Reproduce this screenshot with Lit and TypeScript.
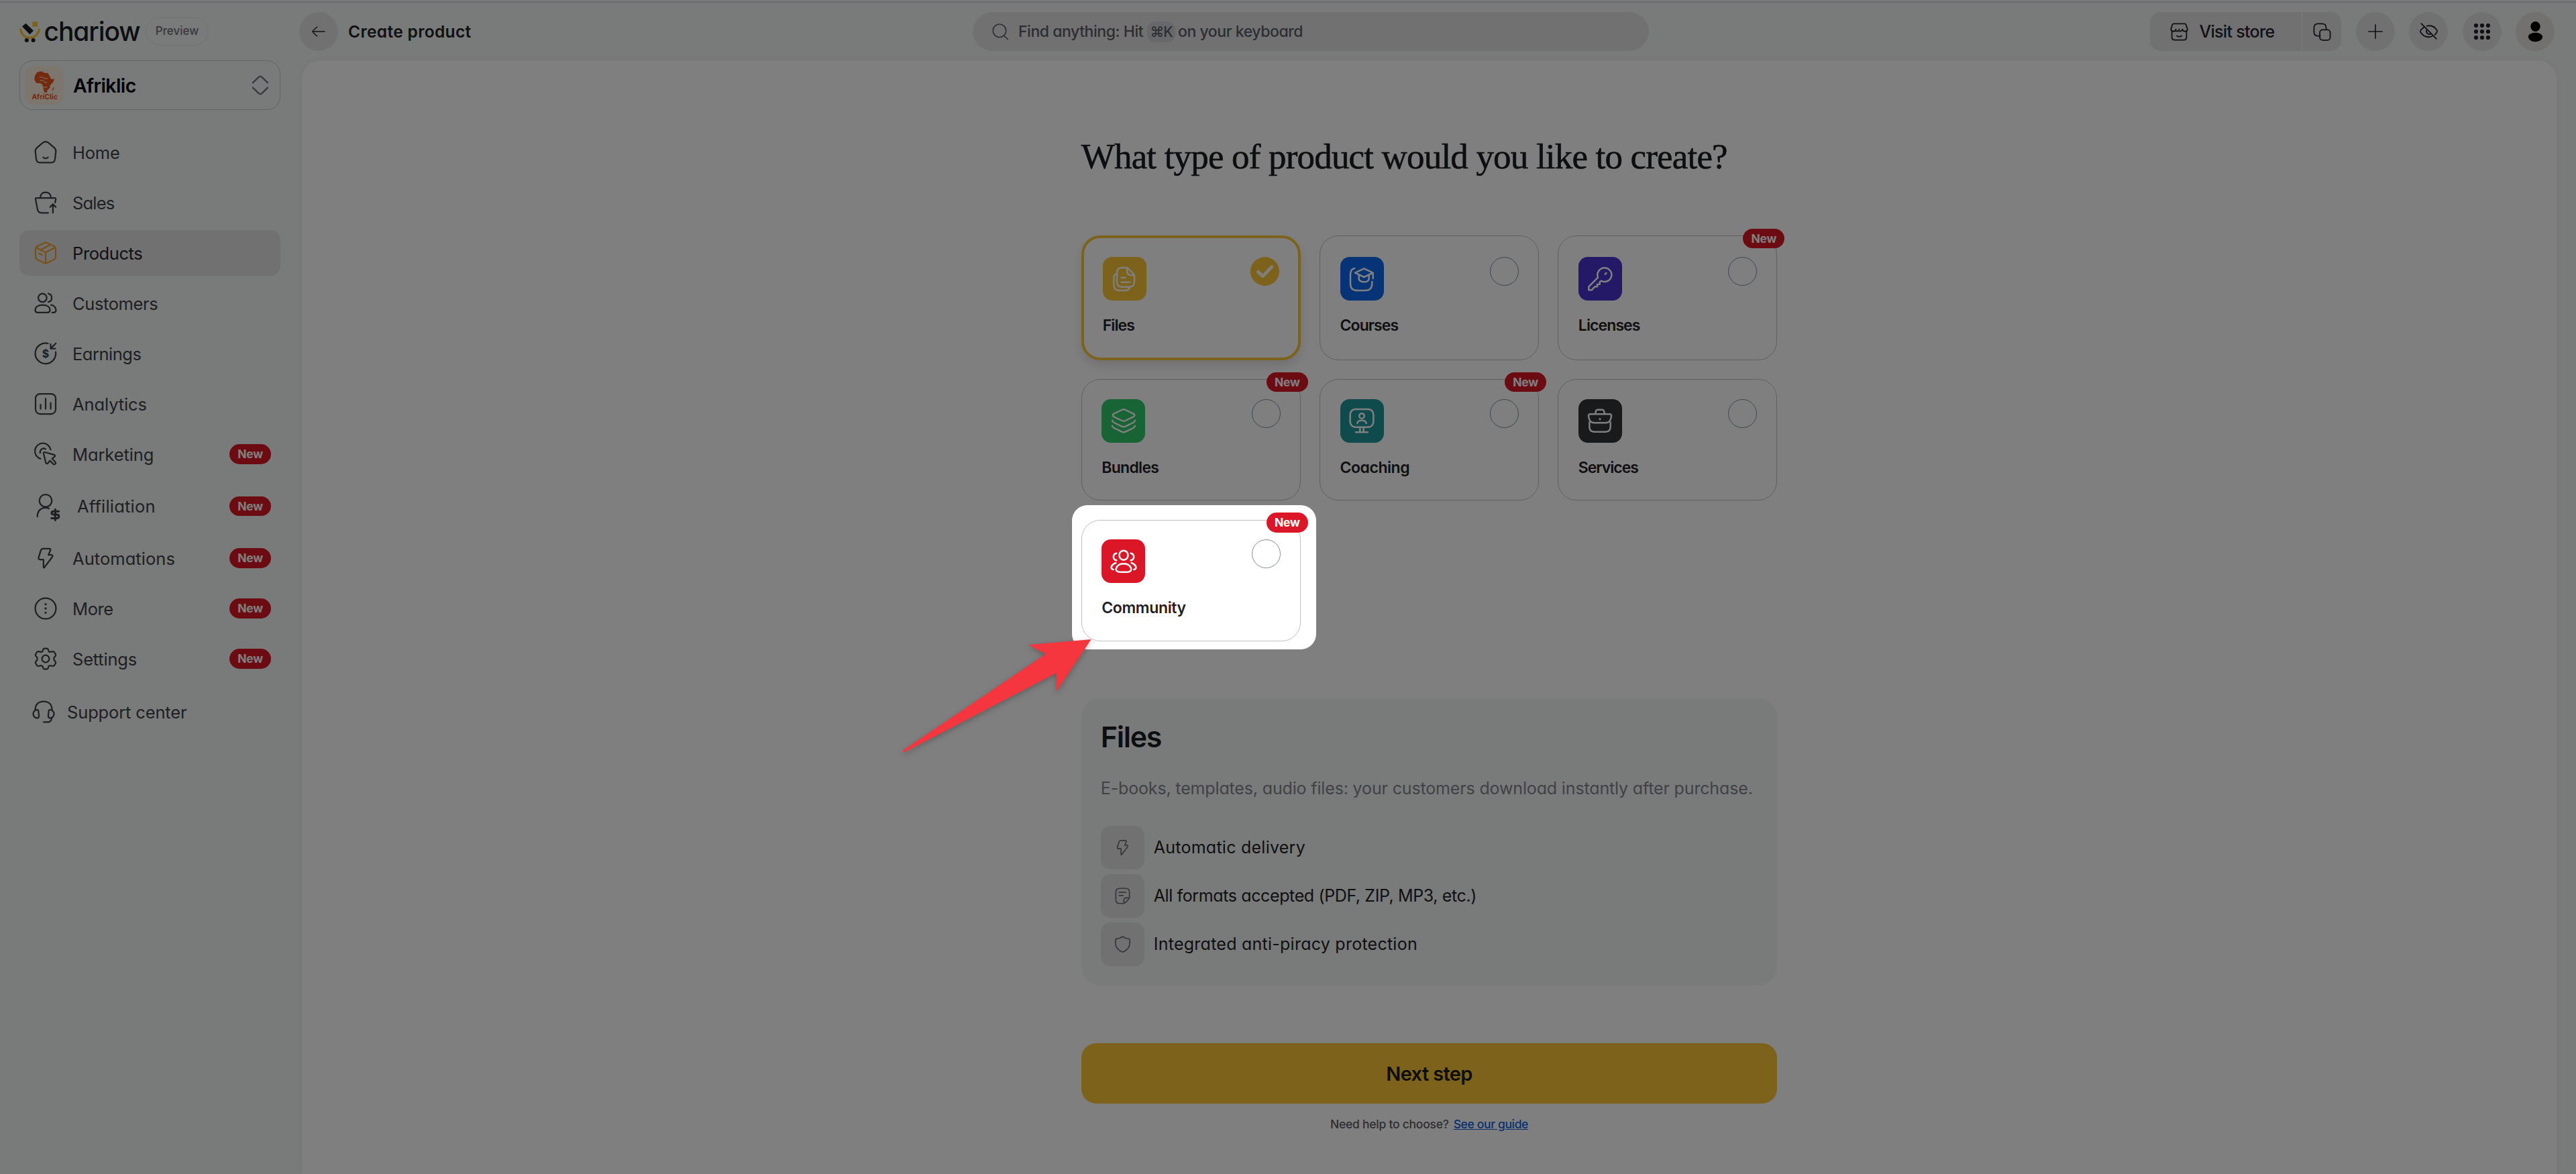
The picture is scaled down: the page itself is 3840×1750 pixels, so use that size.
import { LitElement, html, css, svg, nothing } from 'lit';
import { customElement, property } from 'lit/decorators.js';
import { classMap } from 'lit/directives/class-map.js';

const icons: Record<string, unknown> = {
  home: svg`
    <path d="M9.3 2.4Q12 .6 14.7 2.4L20.4 7.2Q22.4 8.9 22.2 11.2L21.3 18.9Q20.8 22.2 17.7 22.2H6.3Q3.2 22.2 2.7 18.9L1.8 11.2Q1.6 8.9 3.6 7.2Z" />
    <path d="M9.6 17Q12 19.2 14.4 17" />`,
  sales: svg`
    <path d="M6.8 7.2C6.8 3.6 9 1.7 12 1.7S17.2 3.6 17.2 7.2" />
    <path d="M14.6 22.2H8.2C5.2 22.2 4.3 21 3.9 18.4L2 8.6Q1.8 7.4 3 7.4H21Q22.3 7.4 22.1 8.6L21.4 12" />
    <path d="M19.3 22.2V13.8M16.5 16.4 19.3 13.6 22.1 16.4" />`,
  products: svg`
    <path d="M10.3 2.1Q12 1.3 13.7 2.1L20 5.2Q22 6.2 22 8.3V15.7Q22 17.8 20 18.8L13.7 21.9Q12 22.7 10.3 21.9L4 18.8Q2 17.8 2 15.7V8.3Q2 6.2 4 5.2Z" />
    <path d="M2.8 6.9 12 11.5 21.2 6.9M12 11.7V22.2M7 9 16.6 3.8M5.6 12.6 8.4 14" />`,
  customers: svg`
    <circle cx="8.9" cy="6.6" r="4.2" />
    <path d="M14.7 2.4A4.3 4.3 0 0 1 14.7 10.8M17.4 13.8C20.4 14 22.3 16.3 22.3 18.8Q22.3 21.2 20 21.2H18.4" />
    <path d="M4 21.2Q1.7 21.2 1.7 18.8C1.7 15.6 4.6 13.8 9 13.8S16.3 15.6 16.3 18.8Q16.3 21.2 14 21.2Z" />`,
  earnings: svg`
    <path d="M14.4 2A10.2 10.2 0 1 0 22 10.4" />
    <path d="M22.2 1.8 17.4 6.6M17 2.6V7.1H21.6" />
    <text class="glyph" x="12" y="15.9" font-size="10.6">$</text>`,
  analytics: svg`
    <rect x="2" y="2" width="20" height="20" rx="4.4" />
    <path d="M7 12.8V17M12 6.8V17M17 11V17" />`,
  marketing: svg`
    <path d="M6.9 16.6A7.9 7.9 0 1 1 17 7.6" />
    <path d="M6.6 10.8A3.6 3.6 0 0 1 12 6.9" />
    <path d="M10 11.3Q9.7 9.8 11.2 10L20.3 12.6Q22.2 13.4 20.8 14.6L18.4 16.4 21.6 19.8Q22.6 21 21.3 21.9 20.2 22.7 19.2 21.4L16.2 18.4 14.4 20.8Q13.2 22.3 12.2 20.6Z" />`,
  affiliation: svg`
    <circle cx="12" cy="6.2" r="6.2" />
    <path d="M3.8 22C3.8 16.6 7 13.2 12 13.2Q13.8 13.2 15.4 14" />
    <path class="heavy" d="M25 16.8H20Q18 16.8 18 18.4T20 20H23.2Q25.2 20 25.2 21.8T23.2 23.6H17.8M21.6 14.8V25.6" />`,
  bolt: svg`
    <path d="M9.6 2.6H15.6Q17.2 2.7 16.8 4L14.8 8.8H17.6Q19.6 9 18.6 10.8L10.6 21.4Q9.8 21.9 9.9 20.8V13.4H6.4Q4.7 13.2 5 11.6L7.2 4.4Q7.8 2.6 9.6 2.6Z" />`,
  more: svg`
    <circle cx="12" cy="12" r="10.3" />
    <path class="dots" d="M12 7.8V7.81M12 12V12.01M12 16.2V16.21" />`,
  settings: svg`
    <circle cx="12" cy="12" r="3.6" />
    <path d="M9.6 2.6Q9.9 1.7 10.9 1.7H13.1Q14.1 1.7 14.4 2.6L15 4.5Q16 5.7 17.4 5.1L19.3 4.8Q20.2 4.7 20.7 5.5L21.9 7.5Q22.4 8.3 21.8 9.1L20.5 10.6Q19.9 12 20.5 13.4L21.8 14.9Q22.4 15.7 21.9 16.5L20.7 18.5Q20.2 19.3 19.3 19.2L17.4 18.9Q16 18.3 15 19.5L14.4 21.4Q14.1 22.3 13.1 22.3H10.9Q9.9 22.3 9.6 21.4L9 19.5Q8 18.3 6.6 18.9L4.7 19.2Q3.8 19.3 3.3 18.5L2.1 16.5Q1.6 15.7 2.2 14.9L3.5 13.4Q4.1 12 3.5 10.6L2.2 9.1Q1.6 8.3 2.1 7.5L3.3 5.5Q3.8 4.7 4.7 4.8L6.6 5.1Q8 5.7 9 4.5Z" />`,
  support: svg`
    <path d="M3.6 10.4C3.6 4.6 7 1.8 12 1.8S20.4 4.6 20.4 10.4" />
    <path d="M7 12.2Q7 9.8 5.2 10 1.7 11 1.7 14.1T5.2 18.2Q7.4 18.4 7.4 16ZM17 12.2Q17 9.8 18.8 10 22.3 11 22.3 14.1T18.8 18.2Q16.6 18.4 16.6 16Z" />
    <path d="M20 18.4Q19.6 22.3 15.6 22.3H12" />`,
  chevrons: svg`<path d="M4.6 9.6 10.4 3.9Q12 2.6 13.6 3.9L19.4 9.6M4.6 14.4 10.4 20.1Q12 21.4 13.6 20.1L19.4 14.4" />`,
  back: svg`<path d="M21 12H3.4M9.6 5.2Q3 10.8 3 12T9.6 18.8" />`,
  search: svg`<circle cx="11" cy="10.8" r="9" /><path d="M17.2 17.6 22.4 22.6" />`,
  store: svg`
    <path d="M3 11V18.4Q3 22 6.4 22H17.6Q21 22 21 18.4V11" />
    <path d="M8 8.8Q7.8 11.4 4.8 11.4 2 11.2 1.8 8.6L3.6 3.2Q4 2 5.2 2H18.8Q20 2 20.4 3.2L22.2 8.6Q22 11.4 19.4 11.4 16.4 11.4 16 8.8 15.4 11.4 12.2 11.2M12 8.8Q11.4 11.4 8.4 11.2" />
    <path d="M9 17Q12 18.8 15 17" />`,
  copy: svg`
    <path d="M9.6 17H7Q2 17 2 12V7Q2 2 7 2H12Q17 2 17 7V9" />
    <rect x="9.2" y="9.4" width="12.8" height="12.8" rx="3.4" />`,
  plus: svg`<path d="M12 2.6V21.4M2.6 12H21.4" />`,
  hide: svg`
    <path d="M2.8 1.8 21.4 20.6" />
    <path d="M9.6 4.8Q17.6 2.8 22.2 10.2 22.6 11.4 22.2 12.2 21 14 19.6 15.6M6 6.4Q3.2 8.2 1.8 10.6 1.5 11.4 1.8 12.2 5.6 18.4 12 18.4 14.4 18.2 16.4 17.2" />
    <path d="M9.6 9.4A3.6 3.6 0 0 0 14.4 14.4" />`,
  grid: svg`<path class="grid-dots" d="M3 3V3.01M12 3V3.01M21 3V3.01M3 12V12.01M12 12V12.01M21 12V12.01M3 21V21.01M12 21V21.01M21 21V21.01" />`,
  user: svg`<path class="solid" d="M12 0A5.6 5.8 0 0 1 12 11.6 5.6 5.8 0 0 1 12 0ZM12 13C16.6 13 20.2 15 20.2 17.8S16.6 23.4 12 23.4 3.8 20.8 3.8 17.8 7.4 13 12 13Z" />`,
  files: svg`
    <path d="M5 7.4Q2.6 8 2.6 11V17Q2.6 22.2 7.4 22.2H12.4Q16.4 22.2 17 19" />
    <path d="M14 1.8H10Q5.4 1.8 5.4 6.4V14.4Q5.4 19 10 19H16.4Q21 19 21 14.4V8.6Q18 4 14 1.8ZM14.4 2V5Q14.4 8.4 17.6 8.4H20.8" />
    <path d="M9.4 10.8H13M9.4 14.8H17" />`,
  courses: svg`
    <path d="M5.6 2.4Q1.8 3 1.8 8V16Q1.8 22.2 8 22.2H15Q21 22.2 21.2 16V14.4" />
    <path d="M14 2.6 22 6.4 14 10.2 6 6.4ZM22 6.4V11.4M9.4 8.4V12Q10.4 14.6 14 14.6T18.4 12V8.4" />`,
  licenses: svg`
    <path d="M15.6 2A6.2 6.2 0 1 1 13.2 13.6L11.8 14.6V16.6H9.6V18.8H7.4L4.6 21.8H2V18.8L10.2 10.6A6.4 6.4 0 0 1 15.6 2ZM16.6 7.6 17.6 6.6" />`,
  bundles: svg`
    <path d="M10.4 2.4Q12 1.4 13.6 2.4L20.6 5.8Q23 7.2 20.6 8.6L13.6 12Q12 12.8 10.4 12L3.4 8.6Q1 7.2 3.4 5.8Z" />
    <path d="M1.8 11.8Q2 13 3.4 13.8L10.4 17.2Q12 18 13.6 17.2L20.6 13.8Q22 13 22.2 11.8M1.8 16.6Q2 17.8 3.4 18.6L10.4 22Q12 22.8 13.6 22L20.6 18.6Q22 17.8 22.2 16.6" />`,
  coaching: svg`
    <rect x="1.6" y="1.8" width="20.8" height="16" rx="4.6" />
    <circle cx="12" cy="7.8" r="2.3" />
    <path d="M8 14.4Q8.4 11.8 12 11.8T16 14.4M10.4 18V22M13.6 18V22M6.6 22.4H17.4" />`,
  services: svg`
    <path d="M2.6 13.4V17.6Q2.6 22 7 22H17Q21.4 22 21.4 17.6V13.4" />
    <path d="M3.4 6.2H20.6Q22.4 6.2 22.2 8 21.6 14 17 14H7Q2.4 14 1.8 8 1.6 6.2 3.4 6.2ZM8 6Q8 2.2 10 2.2H14Q16 2.2 16 6M12 10.4V11" />`,
  community: svg`
    <ellipse cx="12" cy="6.4" rx="3.9" ry="4.2" />
    <path d="M8.4 21.4Q5 21 5.2 18.6 6.4 14 12 14T18.8 18.6Q19 21 15.6 21.4Z" />
    <path d="M5.6 4.6Q2.9 5.2 2.9 7.8T5.6 11M18.4 4.6Q21.1 5.2 21.1 7.8T18.4 11M5 13.2Q1 14.8 1 17.6 1.2 19 2.8 19.2M19 13.2Q23 14.8 23 17.6 22.8 19 21.2 19.2" />`,
  note: svg`
    <path d="M13.4 22H8Q3 22 3 17V7Q3 2 8 2H16Q21 2 21 7V14.4Q18.6 19.4 13.4 22ZM13.6 21.6V18Q13.6 14.6 17 14.6H20.8" />
    <path d="M7.4 7.2H16.4M7.4 11.4H12.6" />`,
  shield: svg`<path d="M12 1.8Q15.6 4.6 20.2 4.8 21.4 5 21.4 6.4V10.8Q21.2 18.6 12 22.4 2.8 18.6 2.6 10.8V6.4Q2.6 5 3.8 4.8 8.4 4.6 12 1.8Z" />`,
};

const iconStyles = css`
  svg {
    display: block;
    flex: none;
    fill: none;
    stroke: currentColor;
    stroke-width: 1.5;
    stroke-linecap: round;
    stroke-linejoin: round;
    overflow: visible;
  }
  .glyph {
    fill: currentColor;
    stroke: none;
    font-weight: 700;
    text-anchor: middle;
  }
  .heavy {
    stroke-width: 2;
  }
  .dots {
    stroke-width: 2.2;
  }
  .grid-dots {
    stroke-width: 6.2;
  }
  .solid {
    fill: currentColor;
    stroke: none;
  }
`;

const badgeStyles = css`
  .badge {
    box-sizing: border-box;
    width: 62px;
    height: 29.5px;
    border-radius: 15px;
    background: #db1627;
    color: white;
    font-size: 17.5px;
    font-weight: 700;
    letter-spacing: -0.3px;
    line-height: 29px;
    text-align: center;
  }
`;

const icon = (name: string, size = 36) => html`
  <svg viewBox="0 0 24 24" width=${size} height=${size}>${icons[name]}</svg>
`;

interface NavItem {
  label: string;
  icon: string;
  tracking: number;
  active?: boolean;
  badge?: boolean;
  variant?: string;
}

const navItems: NavItem[] = [
  { label: 'Home', icon: 'home', tracking: -0.2 },
  { label: 'Sales', icon: 'sales', tracking: -0.8 },
  { label: 'Products', icon: 'products', tracking: -0.4, active: true },
  { label: 'Customers', icon: 'customers', tracking: -0.4 },
  { label: 'Earnings', icon: 'earnings', tracking: -0.5 },
  { label: 'Analytics', icon: 'analytics', tracking: -0.1 },
  { label: 'Marketing', icon: 'marketing', tracking: -0.1, badge: true },
  { label: 'Affiliation', icon: 'affiliation', tracking: 0.2, badge: true, variant: 'affiliation' },
  { label: 'Automations', icon: 'bolt', tracking: 0.05, badge: true },
  { label: 'More', icon: 'more', tracking: -0.4, badge: true },
  { label: 'Settings', icon: 'settings', tracking: -0.2, badge: true },
  { label: 'Support center', icon: 'support', tracking: -0.15, variant: 'support' },
];

const productTypes = [
  { label: 'Files', icon: 'files', color: '#fbc536', tracking: -0.9, selected: true },
  { label: 'Courses', icon: 'courses', color: '#0f69ef', tracking: -0.9 },
  { label: 'Licenses', icon: 'licenses', color: '#4733cf', tracking: -0.9, badge: true },
  { label: 'Bundles', icon: 'bundles', color: '#30c868', tracking: -0.7, badge: true },
  { label: 'Coaching', icon: 'coaching', color: '#1f9498', tracking: -0.45, badge: true },
  { label: 'Services', icon: 'services', color: '#333538', tracking: -1 },
  { label: 'Community', icon: 'community', color: '#db1627', tracking: -0.35, badge: true },
];

const features = [
  { label: 'Automatic delivery', icon: 'bolt', tracking: 0.25 },
  { label: 'All formats accepted (PDF, ZIP, MP3, etc.)', icon: 'note', tracking: -0.38 },
  { label: 'Integrated anti-piracy protection', icon: 'shield', tracking: 0.25 },
];

@customElement('side-bar')
class SideBar extends LitElement {
  static styles = [iconStyles, badgeStyles, css`
    :host {
      display: block;
      width: 389px;
      padding-left: 29px;
    }
    .brand {
      display: flex;
      align-items: center;
      height: 86px;
    }
    .brand-name {
      margin-left: 5.5px;
      width: 143.5px;
      font-size: 39px;
      font-weight: 500;
      line-height: 48px;
      letter-spacing: -1.1px;
      color: #1b1c1f;
    }
    .preview {
      box-sizing: border-box;
      width: 94px;
      height: 42px;
      margin-left: 8px;
      border: 1px solid #e2e3e6;
      border-radius: 21px;
      font-size: 17px;
      font-weight: 500;
      line-height: 39px;
      text-align: center;
      color: #71717a;
    }
    .shop {
      display: flex;
      align-items: center;
      box-sizing: border-box;
      height: 74px;
      padding: 0 11px 0 7px;
      border: 1px solid #c6c8c7;
      border-radius: 20px;
      color: black;
    }
    .shop-name {
      flex: 1;
      margin-left: 14px;
      font-size: 28.5px;
      font-weight: 600;
      letter-spacing: -0.6px;
    }
    .avatar-text {
      fill: #e9541c;
      stroke: none;
      font-weight: 700;
    }
    .chevrons {
      color: #71717a;
    }
    nav {
      display: flex;
      flex-direction: column;
      gap: 7px;
      margin-top: 29px;
    }
    .item {
      display: flex;
      align-items: center;
      box-sizing: border-box;
      height: 68px;
      padding: 0 14px 0 21px;
      border-radius: 14px;
      font-size: 25.5px;
      font-weight: 400;
      color: #3f4045;
    }
    .item span {
      flex: 1;
      margin-left: 22px;
    }
    .item.active {
      background: #e2e3e5;
      color: #222327;
    }
    .item.active svg {
      color: #f0a22e;
    }
    .item.affiliation {
      height: 73px;
    }
    .item.affiliation span {
      margin-left: 29px;
    }
    .item.support {
      height: 76px;
      padding-left: 18px;
    }
    .item.support span {
      margin-left: 17px;
    }
  `];

  render() {
    return html`
      <div class="brand">
        <svg viewBox="0 0 31 32" width="31" height="32">
          <path d="M1.7 11.5A13.8 13.8 0 0 0 29.3 11.5" stroke="#fbc536" stroke-width="3.4" stroke-linecap="butt" />
          <rect x="19.4" y="1.2" width="7.8" height="7.6" fill="#fbc536" stroke="none" />
          <path d="M4 8.6 9.4 3.8 21 14.8 15.4 20.2Z" fill="#1b1c1f" stroke="none" />
          <circle cx="10.8" cy="29" r="3" fill="#1b1c1f" stroke="none" />
          <circle cx="20.6" cy="29" r="3" fill="#1b1c1f" stroke="none" />
        </svg>
        <div class="brand-name">chariow</div>
        <div class="preview">Preview</div>
      </div>
      <div class="shop">
        <svg viewBox="0 0 58 58" width="58" height="58">
          <rect width="58" height="58" rx="14" fill="#f8eddc" stroke="none" />
          <path fill="#e9541c" stroke="none" d="M18 10 22 8.5H27L28 10.5 34.5 11 38 17.5 39.6 20 44 19.6 42.6 24 37.4 29.4 37.6 33 34 36 32.6 40 29.4 40 28 36.4 27 31 25.4 27 22 26 17.4 26 14.2 21 15 15ZM40.6 36 43 31.4 43.2 34 41.4 37.6Z" />
          <path stroke="#f8eddc" stroke-width="1" d="M22 17H27L29 19H34M23 22H27L30 25H33M24 32H33" />
          <text class="avatar-text" x="10.4" y="50" font-size="11" textLength="38.4" lengthAdjust="spacingAndGlyphs">AfriClic</text>
        </svg>
        <div class="shop-name">Afriklic</div>
        <div class="chevrons">${icon('chevrons', 36)}</div>
      </div>
      <nav>
        ${navItems.map(item => html`
          <div class="item ${classMap({ active: !!item.active, [item.variant ?? 'plain']: true })}">
            ${icon(item.icon)}
            <span style="letter-spacing: ${item.tracking}px">${item.label}</span>
            ${item.badge ? html`<div class="badge">New</div>` : nothing}
          </div>
        `)}
      </nav>
    `;
  }
}

@customElement('top-bar')
class TopBar extends LitElement {
  static styles = [iconStyles, css`
    :host {
      display: flex;
      align-items: center;
      height: 58px;
      padding: 14px 32px 14px 0;
    }
    .round {
      display: flex;
      align-items: center;
      justify-content: center;
      width: 58px;
      height: 58px;
      border-radius: 50%;
      background: #e2e3e5;
      color: #222327;
    }
    .title {
      width: 931px;
      margin-left: 15px;
      font-size: 24.5px;
      font-weight: 600;
      letter-spacing: 0.35px;
      color: #222327;
    }
    .search {
      display: flex;
      align-items: center;
      box-sizing: border-box;
      width: 1008px;
      height: 58px;
      padding-left: 28px;
      border-radius: 29px;
      background: #e2e3e5;
      font-size: 23px;
      font-weight: 500;
      letter-spacing: -0.45px;
      white-space: nowrap;
      color: #5a5c63;
    }
    .search-text {
      margin-left: 14px;
      width: 187px;
    }
    .kbd {
      width: 42px;
      height: 31px;
      margin: 0 4px 0 5px;
      border-radius: 12px;
      background: #cfd0d3;
      line-height: 31px;
      text-align: center;
      font-size: 21px;
      letter-spacing: -1px;
    }
    .actions {
      display: flex;
      align-items: center;
      gap: 21.4px;
      margin-left: auto;
    }
    .store {
      display: flex;
      height: 58px;
      border-radius: 15px;
      background: #e2e3e5;
      color: #222327;
      font-size: 25px;
      font-weight: 500;
      letter-spacing: -0.7px;
    }
    .visit {
      display: flex;
      align-items: center;
      gap: 15px;
      box-sizing: border-box;
      width: 227px;
      padding-left: 29px;
      border-right: 1px solid #fafafa;
    }
    .copy {
      display: flex;
      align-items: center;
      justify-content: center;
      width: 58px;
    }
    .profile {
      background: #e4e2e1;
      color: black;
    }
  `];

  render() {
    return html`
      <div class="round">${icon('back', 24)}</div>
      <div class="title">Create product</div>
      <div class="search">
        ${icon('search', 26)}
        <div class="search-text">Find anything: Hit</div>
        <div class="kbd">⌘K</div>
        <span>on your keyboard</span>
      </div>
      <div class="actions">
        <div class="store">
          <div class="visit">${icon('store', 29)}<span>Visit store</span></div>
          <div class="copy">${icon('copy', 29)}</div>
        </div>
        <div class="round">${icon('plus', 26)}</div>
        <div class="round">${icon('hide', 29)}</div>
        <div class="round">${icon('grid', 24)}</div>
        <div class="round profile">${icon('user', 31)}</div>
      </div>
    `;
  }
}

@customElement('product-card')
class ProductCard extends LitElement {
  @property() label = '';
  @property() icon = '';
  @property() color = '';
  @property({ type: Number }) tracking = 0;
  @property({ type: Boolean }) selected = false;
  @property({ type: Boolean }) badge = false;

  static styles = [iconStyles, badgeStyles, css`
    :host {
      display: flex;
    }
    .card {
      position: relative;
      flex: 1;
      box-sizing: border-box;
      min-height: 181px;
      padding: 28px 29px 28px 29.5px;
      border: 1px solid #bec0c3;
      border-radius: 28px;
      background: white;
      display: flex;
      flex-direction: column;
      justify-content: center;
    }
    .card.selected {
      min-height: 185px;
      padding: 28px;
      border: 4px solid #fbc536;
      box-shadow: 0 8px 16px rgba(0, 0, 0, 0.12);
    }
    .head {
      display: flex;
      justify-content: space-between;
      align-items: flex-start;
    }
    .tile {
      display: flex;
      align-items: center;
      justify-content: center;
      width: 65px;
      height: 65px;
      border-radius: 14px;
      color: white;
    }
    .radio {
      box-sizing: border-box;
      width: 43px;
      height: 43px;
      border: 1px solid #7f8ca3;
      border-radius: 50%;
    }
    .selected .radio {
      border: 0;
      background: #fbc536;
      color: white;
    }
    .radio svg {
      width: 43px;
      height: 43px;
      stroke-width: 2.6;
    }
    .label {
      margin: 19px 0 2px;
      font-size: 23px;
      font-weight: 600;
      line-height: 36px;
      color: #1f2023;
    }
    .badge {
      position: absolute;
      top: -11.5px;
      right: -12px;
    }
  `];

  render() {
    return html`
      <div class="card ${classMap({ selected: this.selected })}">
        <div class="head">
          <div class="tile" style="background: ${this.color}">${icon(this.icon, 40)}</div>
          <div class="radio">
            ${this.selected
              ? html`<svg viewBox="0 0 24 24"><path d="M6.4 12.4 10.4 16 17.8 8.2" /></svg>`
              : nothing}
          </div>
        </div>
        <div class="label" style="letter-spacing: ${this.tracking}px">${this.label}</div>
        ${this.badge ? html`<div class="badge">New</div>` : nothing}
      </div>
    `;
  }
}

@customElement('product-picker')
class ProductPicker extends LitElement {
  static styles = [iconStyles, css`
    :host {
      display: block;
      width: 1037.5px;
    }
    h1 {
      margin: -2px 0 0;
      font-family: 'Liberation Serif', serif;
      font-size: 53px;
      font-weight: 400;
      line-height: 64px;
      letter-spacing: -0.82px;
      color: #1b1c1f;
      -webkit-text-stroke: 0.6px #1b1c1f;
      white-space: nowrap;
    }
    .cards {
      display: grid;
      grid-template-columns: repeat(3, 1fr);
      gap: 28.3px;
      margin-top: 86px;
    }
    .details {
      box-sizing: border-box;
      height: 428px;
      margin-top: 85.6px;
      padding: 27.6px 29px;
      border-radius: 28px;
      background: #f3f6f4;
    }
    h2 {
      margin: 0;
      font-size: 43px;
      font-weight: 600;
      line-height: 58px;
      letter-spacing: -1.3px;
      color: #1b1c1f;
    }
    .description {
      margin: 28px 0 36.4px;
      font-size: 25px;
      line-height: 40px;
      letter-spacing: -0.15px;
      color: #82838c;
      white-space: nowrap;
    }
    .features {
      display: flex;
      flex-direction: column;
      gap: 7px;
    }
    .feature {
      display: flex;
      align-items: center;
      gap: 14px;
      font-size: 25px;
      color: #1f2023;
    }
    .feature span {
      padding-bottom: 1px;
    }
    .feature-icon {
      display: flex;
      align-items: center;
      justify-content: center;
      width: 65px;
      height: 65px;
      border-radius: 14px;
      background: #e2e3e5;
      color: #6b6c74;
    }
    .next {
      height: 90px;
      margin-top: 86px;
      border-radius: 22px;
      background: #fbc536;
      font-size: 29px;
      font-weight: 600;
      line-height: 91px;
      letter-spacing: -0.65px;
      text-align: center;
      color: #1b1c1f;
    }
    .help {
      display: flex;
      justify-content: center;
      gap: 7px;
      margin-top: 16.4px;
      font-size: 17.5px;
      line-height: 28px;
      font-weight: 500;
      letter-spacing: -0.25px;
      color: #5a5c63;
    }
    .help a {
      color: #0f5fe0;
      letter-spacing: -0.35px;
      text-decoration: underline;
    }
  `];

  render() {
    return html`
      <h1>What type of product would you like to create?</h1>
      <div class="cards">
        ${productTypes.map(type => html`
          <product-card
            label=${type.label}
            icon=${type.icon}
            color=${type.color}
            tracking=${type.tracking}
            ?selected=${type.selected}
            ?badge=${type.badge}
          ></product-card>
        `)}
      </div>
      <section class="details">
        <h2>Files</h2>
        <p class="description">E-books, templates, audio files: your customers download instantly after purchase.</p>
        <div class="features">
          ${features.map(feature => html`
            <div class="feature">
              <div class="feature-icon">${icon(feature.icon, 27)}</div>
              <span style="letter-spacing: ${feature.tracking}px">${feature.label}</span>
            </div>
          `)}
        </div>
      </section>
      <div class="next">Next step</div>
      <div class="help"><span>Need help to choose?</span><a>See our guide</a></div>
    `;
  }
}

@customElement('app-root')
class AppRoot extends LitElement {
  static styles = css`
    :host {
      position: relative;
      display: flex;
      box-sizing: border-box;
      width: 3840px;
      height: 1750px;
      padding-top: 4px;
      overflow: hidden;
      background: #f3f6f4;
      font-family: Inter, sans-serif;
      font-feature-settings: 'cv11';
    }
    .top-line {
      position: absolute;
      top: 2px;
      left: 0;
      right: 0;
      height: 2px;
      background: #d6d7e0;
    }
    .page {
      display: flex;
      flex: 1;
      flex-direction: column;
      margin-left: 28px;
    }
    main {
      flex: 1;
      display: flex;
      justify-content: center;
      box-sizing: border-box;
      width: 3361px;
      margin-left: 4px;
      padding-top: 113px;
      border-radius: 28px 28px 0 0;
      background: white;
      box-shadow: 0 0 14px rgba(0, 0, 0, 0.05);
    }
    .spotlight {
      position: absolute;
      left: 1597.5px;
      top: 752.5px;
      width: 364.5px;
      height: 215.5px;
      border-radius: 23px;
      box-shadow: 0 0 0 4000px rgba(0, 0, 0, 0.5);
    }
    .arrow {
      position: absolute;
      left: 1340px;
      top: 940px;
      fill: #f6363f;
      filter: drop-shadow(0 3px 4px rgba(0, 0, 0, 0.25));
    }
  `;

  render() {
    return html`
      <div class="top-line"></div>
      <side-bar></side-bar>
      <div class="page">
        <top-bar></top-bar>
        <main>
          <product-picker></product-picker>
        </main>
      </div>
      <div class="spotlight"></div>
      <svg class="arrow" width="300" height="190" viewBox="1340 940 300 190">
        <path d="M1626.6 953 1532.5 961.3 1559 974.8 1346.2 1118.6Q1345 1121.8 1348.4 1121.2L1574.6 1003.3V1031.3Z" />
      </svg>
    `;
  }
}
